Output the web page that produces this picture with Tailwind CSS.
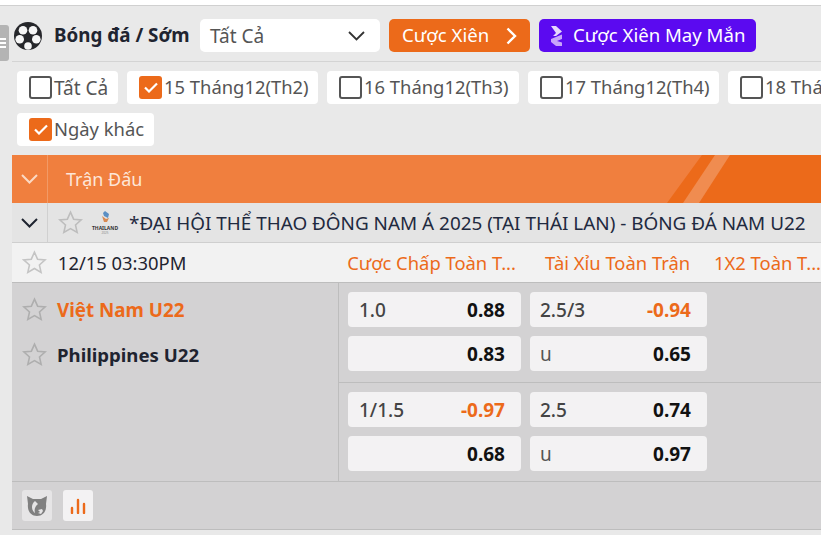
<!DOCTYPE html>
<html lang="vi">
<head>
<meta charset="UTF-8">
<title>Bóng đá / Sớm</title>
<script src="https://cdn.jsdelivr.net/npm/@tailwindcss/browser@4"></script>
</head>
<body class="bg-white overflow-hidden font-['Noto_Sans',sans-serif]">
<div class="w-[821px] h-[535px] overflow-hidden relative">
  <div class="h-[6px] bg-white border-b border-[#d0d0d0]"></div>
  <div class="h-[529px] bg-[#e9e9e9] pl-[12px]">

    <!-- side handle -->
    <div class="absolute left-0 top-[25px] w-[9px] h-[36px] bg-[#b4b4b4] rounded-r-[3px] flex flex-col justify-center gap-[2px]">
      <span class="block h-[2px] w-[6px] bg-white"></span>
      <span class="block h-[2px] w-[6px] bg-white"></span>
      <span class="block h-[2px] w-[6px] bg-white"></span>
    </div>

    <!-- top bar -->
    <div class="h-[56px] flex items-center pt-[4px] border-b border-[#d4d4d4]">
      <svg class="w-[28px] h-[28px] ml-[2px]" viewBox="0 0 28 28">
        <circle cx="14" cy="14" r="14" fill="#26272b"/>
        <circle cx="9" cy="8.300" r="4.300" fill="#f6f6f6"/>
        <circle cx="19" cy="8.300" r="4.300" fill="#f6f6f6"/>
        <circle cx="5.700" cy="17.300" r="4.300" fill="#f6f6f6"/>
        <circle cx="22.300" cy="17.300" r="4.300" fill="#f6f6f6"/>
        <circle cx="14" cy="24" r="3.800" fill="#f6f6f6"/>
      </svg>
      <span class="ml-[12px] w-[137px] text-[18.800px] font-bold text-[#1f2430] whitespace-nowrap">Bóng đá / Sớm</span>
      <div class="ml-[9px] w-[180px] h-[33px] bg-white rounded-[5px] flex items-center justify-between pl-[10px] pr-[15px] text-[19px] text-[#555]">
        <span class="pt-[2px]">Tất Cả</span>
        <svg class="w-[17px] h-[10px]" viewBox="0 0 17 10" fill="none" stroke="#333" stroke-width="1.800"><path d="M1 1l7.500 7.500L16 1"/></svg>
      </div>
      <div class="ml-[9px] w-[141px] h-[33px] bg-[#ec6a1a] rounded-[5px] flex items-center justify-between pl-[13px] pr-[13px] text-[18.600px] text-[#fff]">
        <span class="pb-[2px]">Cược Xiên</span>
        <svg class="w-[11px] h-[18px]" viewBox="0 0 11 18" fill="none" stroke="#fff" stroke-width="2.400"><path d="M1.500 1.500L9 9l-7.500 7.500"/></svg>
      </div>
      <div class="ml-[9px] w-[217px] h-[33px] bg-[#5b0af0] rounded-[5px] flex items-center pl-[12px] text-[18.600px] text-white">
        <svg class="w-[11px] h-[20px]" viewBox="0 0 11 20"><path d="M0 0h5l6 5.500-6 4.500H2L5 7z" fill="#e6d6fd"/><path d="M0 13l11-4.500V13l-5 2 5 1.500V20H5L0 16z" fill="#c8a4fa"/></svg>
        <span class="ml-[11px] pb-[2px] whitespace-nowrap">Cược Xiên May Mắn</span>
      </div>
    </div>

    <!-- date filters -->
    <div class="flex flex-col gap-[9px] pt-[9px] pl-[5px] text-[18.400px] text-[#555]">
      <div class="flex gap-[9px]">
        <div class="h-[33px] w-[101px] shrink-0 bg-white rounded-[4px] flex items-center gap-[2px] pl-[12px]">
          <span class="w-[23px] h-[23px] border-[2px] border-[#555] rounded-[3px] bg-white"></span><span class="text-[19px] pt-[1px] whitespace-nowrap">Tất Cả</span>
        </div>
        <div class="h-[33px] w-[191px] shrink-0 bg-white rounded-[4px] flex items-center gap-[2px] pl-[12px]">
          <span class="w-[23px] h-[23px] bg-[#ec6a1a] rounded-[3px] flex items-center justify-center"><svg class="w-[14px] h-[11px]" viewBox="0 0 14 11" fill="none" stroke="#fff" stroke-width="2.200"><path d="M1 5.500l4 4L13 1.500"/></svg></span><span class="pb-[1px] whitespace-nowrap">15 Tháng12(Th2)</span>
        </div>
        <div class="h-[33px] w-[192px] shrink-0 bg-white rounded-[4px] flex items-center gap-[2px] pl-[12px]">
          <span class="w-[23px] h-[23px] border-[2px] border-[#555] rounded-[3px] bg-white"></span><span class="pb-[1px] whitespace-nowrap">16 Tháng12(Th3)</span>
        </div>
        <div class="h-[33px] w-[191px] shrink-0 bg-white rounded-[4px] flex items-center gap-[2px] pl-[12px]">
          <span class="w-[23px] h-[23px] border-[2px] border-[#555] rounded-[3px] bg-white"></span><span class="pb-[1px] whitespace-nowrap">17 Tháng12(Th4)</span>
        </div>
        <div class="h-[33px] w-[191px] shrink-0 bg-white rounded-[4px] flex items-center gap-[2px] pl-[12px]">
          <span class="w-[23px] h-[23px] border-[2px] border-[#555] rounded-[3px] bg-white"></span><span class="pb-[1px] whitespace-nowrap">18 Tháng12(Th5)</span>
        </div>
      </div>
      <div class="h-[33px] w-[137px] bg-white rounded-[4px] flex items-center gap-[2px] pl-[12px]">
        <span class="w-[23px] h-[23px] bg-[#ec6a1a] rounded-[3px] flex items-center justify-center"><svg class="w-[14px] h-[11px]" viewBox="0 0 14 11" fill="none" stroke="#fff" stroke-width="2.200"><path d="M1 5.500l4 4L13 1.500"/></svg></span><span class="pb-[1px] whitespace-nowrap">Ngày khác</span>
      </div>
    </div>

    <!-- orange header -->
    <div class="mt-[9px] h-[48px] bg-[#ec6a1a] flex items-stretch relative overflow-hidden">
      <svg class="absolute left-0 top-0 w-[809px] h-[48px]" viewBox="0 0 809 48">
        <path d="M0 0H690L655 48H0z" fill="#f07f3e"/>
        <path d="M703 0H718L687 48H671z" fill="#f08c50"/>
      </svg>
      <div class="relative w-[36px] border-r border-[#f29a66] flex items-center justify-center">
        <svg class="w-[17px] h-[10px]" viewBox="0 0 17 10" fill="none" stroke="#fbd9c4" stroke-width="2"><path d="M1 1l7.500 7.500L16 1"/></svg>
      </div>
      <span class="relative ml-[18px] self-center text-[18px] text-[#fde6d8]">Trận Đấu</span>
    </div>

    <!-- league row -->
    <div class="h-[40px] bg-[#e4e4e4] flex items-center border-b border-[#cfcfcf]">
      <div class="w-[36px] h-full border-r border-[#d0d0d0] flex items-center justify-center">
        <svg class="w-[17px] h-[10px]" viewBox="0 0 17 10" fill="none" stroke="#1f2430" stroke-width="2"><path d="M1 1l7.500 7.500L16 1"/></svg>
      </div>
      <svg class="ml-[10px] w-[25px] h-[25px]" viewBox="0 0 24 24" fill="none" stroke="#bdbdbd" stroke-width="1.500"><path d="M12 2l3 6.800 7.300.7-5.500 4.900 1.600 7.200-6.400-3.800-6.400 3.800 1.600-7.200L1.700 9.500 9 8.800z"/></svg>
      <div class="ml-[9px] w-[26px] flex flex-col items-center">
        <svg class="w-[9px] h-[12px]" viewBox="0 0 9 12"><path d="M4 0l4 3-1 4-4-2-1-3z" fill="#5b8fc4"/><path d="M1 5l4 3 3-1-2 4H3z" fill="#d98a52"/></svg>
        <span class="mt-[2px] text-[5px] leading-[6px] font-bold text-[#333]">THAILAND</span>
        <span class="text-[3px] leading-[4px] text-[#888]">2025</span>
      </div>
      <span class="ml-[11px] pt-[2px] text-[18.900px] text-[#1f2a40] whitespace-nowrap">*ĐẠI HỘI THỂ THAO ĐÔNG NAM Á 2025 (TẠI THÁI LAN) - BÓNG ĐÁ NAM U22</span>
    </div>

    <!-- column titles -->
    <div class="h-[40px] bg-[#f2f2f2] flex items-center border-b border-[#bdbdbd] text-[18.400px]">
      <svg class="ml-[10px] w-[25px] h-[25px]" viewBox="0 0 24 24" fill="none" stroke="#c4c4c4" stroke-width="1.500"><path d="M12 2l3 6.800 7.300.7-5.500 4.900 1.600 7.200-6.400-3.800-6.400 3.800 1.600-7.200L1.700 9.500 9 8.800z"/></svg>
      <span class="ml-[11px] w-[291px] text-[#1f2430] whitespace-nowrap">12/15 03:30PM</span>
      <span class="w-[199px] text-[#ec6a1a] whitespace-nowrap">Cược Chấp Toàn T...</span>
      <span class="w-[170px] text-[#ec6a1a] whitespace-nowrap">Tài Xỉu Toàn Trận</span>
      <span class="text-[#ec6a1a] whitespace-nowrap">1X2 Toàn T...</span>
    </div>

    <!-- match body -->
    <div class="bg-[#d3d2d3] h-[198px] flex">
      <div class="w-[327px] border-r border-[#bdbdbd] pt-[5px]">
        <div class="flex items-center h-[45px]">
          <svg class="ml-[10px] mb-[3px] w-[25px] h-[25px]" viewBox="0 0 24 24" fill="none" stroke="#aeaeae" stroke-width="1.500"><path d="M12 2l3 6.800 7.300.7-5.500 4.900 1.600 7.200-6.400-3.800-6.400 3.800 1.600-7.200L1.700 9.500 9 8.800z"/></svg>
          <span class="ml-[10px] text-[18.800px] font-bold text-[#ec6a1a]">Việt Nam U22</span>
        </div>
        <div class="flex items-center h-[45px]">
          <svg class="ml-[10px] mb-[3px] w-[25px] h-[25px]" viewBox="0 0 24 24" fill="none" stroke="#aeaeae" stroke-width="1.500"><path d="M12 2l3 6.800 7.300.7-5.500 4.900 1.600 7.200-6.400-3.800-6.400 3.800 1.600-7.200L1.700 9.500 9 8.800z"/></svg>
          <span class="ml-[10px] pb-[2px] text-[18.600px] font-bold text-[#1f2430]">Philippines U22</span>
        </div>
      </div>
      <div class="flex-1 text-[19px]">
        <div class="h-[100px] border-b border-[#bdbdbd] pt-[9px] pl-[9px] grid grid-cols-[173px_177px] gap-x-[9px] gap-y-[9px] content-start">
          <div class="h-[35px] pt-[2px] bg-[#f3f2f3] rounded-[4px] flex items-center justify-between pl-[11px] pr-[16px]"><span class="font-medium text-[#444]">1.0</span><span class="font-bold text-[#111]">0.88</span></div>
          <div class="h-[35px] pt-[2px] bg-[#f3f2f3] rounded-[4px] flex items-center justify-between pl-[10px] pr-[16px]"><span class="font-medium text-[#444]">2.5/3</span><span class="font-bold text-[#ec6a1a]">-0.94</span></div>
          <div class="h-[35px] pt-[2px] bg-[#f3f2f3] rounded-[4px] flex items-center justify-end pl-[11px] pr-[16px]"><span class="font-bold text-[#111]">0.83</span></div>
          <div class="h-[35px] pt-[2px] bg-[#f3f2f3] rounded-[4px] flex items-center justify-between pl-[10px] pr-[16px]"><span class="text-[#555]">u</span><span class="font-bold text-[#111]">0.65</span></div>
        </div>
        <div class="h-[98px] pt-[9px] pl-[9px] grid grid-cols-[173px_177px] gap-x-[9px] gap-y-[9px] content-start">
          <div class="h-[35px] pt-[2px] bg-[#f3f2f3] rounded-[4px] flex items-center justify-between pl-[11px] pr-[16px]"><span class="font-medium text-[#444]">1/1.5</span><span class="font-bold text-[#ec6a1a]">-0.97</span></div>
          <div class="h-[35px] pt-[2px] bg-[#f3f2f3] rounded-[4px] flex items-center justify-between pl-[10px] pr-[16px]"><span class="font-medium text-[#444]">2.5</span><span class="font-bold text-[#111]">0.74</span></div>
          <div class="h-[35px] pt-[2px] bg-[#f3f2f3] rounded-[4px] flex items-center justify-end pl-[11px] pr-[16px]"><span class="font-bold text-[#111]">0.68</span></div>
          <div class="h-[35px] pt-[2px] bg-[#f3f2f3] rounded-[4px] flex items-center justify-between pl-[10px] pr-[16px]"><span class="text-[#555]">u</span><span class="font-bold text-[#111]">0.97</span></div>
        </div>
      </div>
    </div>

    <!-- footer tools -->
    <div class="h-[49px] bg-[#d3d2d3] border-y border-[#bdbdbd] flex items-center gap-[11px] pl-[10px]">
      <div class="w-[30px] h-[31px] bg-[#e6e5e6] rounded-[3px] flex items-center justify-center">
        <svg class="w-[24px] h-[24px]" viewBox="0 0 24 24"><path d="M2 2l6 3h8l6-3-1 8c1 7-3 12-9 12S2 17 3 10z" fill="#808080"/><path d="M10 7c-4 3-4 9 0 12-1-3 0-7 3-9zM13 16l4-1 1 2-2 3-3-1 2-1z" fill="#e6e5e6"/></svg>
      </div>
      <div class="w-[30px] h-[31px] bg-[#f3f2f3] rounded-[3px] flex items-center justify-center">
        <svg class="w-[16px] h-[16px]" viewBox="0 0 16 16" fill="none" stroke="#ec6a1a" stroke-width="2.400" stroke-linecap="round"><path d="M2 10v5M8 2v13M14 6v9"/></svg>
      </div>
    </div>
  </div>
</div>
</body>
</html>
